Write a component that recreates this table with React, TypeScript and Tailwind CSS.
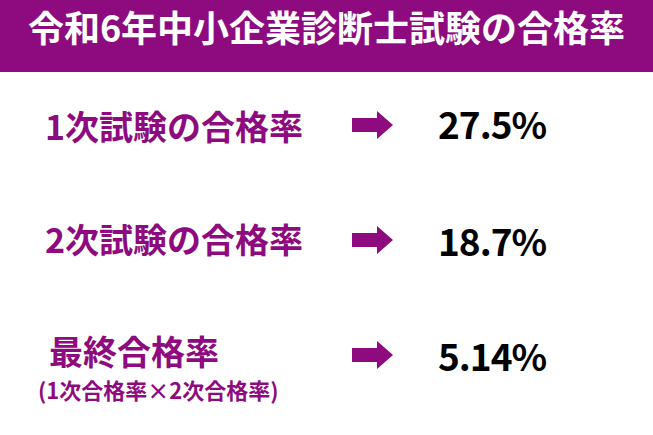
const jp = "font-['Noto_Sans_CJK_JP','Noto_Sans',sans-serif]"

type Row = {
  label: string
  sub?: string
  rate: string
  rowCls: string
  arrowCls: string
  rateCls: string
}

const rows: Row[] = [
  { label: "1次試験の合格率", rate: "27.5%", rowCls: "mt-[37px]", arrowCls: "pt-[2px]", rateCls: "-mt-[4px]" },
  { label: "2次試験の合格率", rate: "18.7%", rowCls: "mt-[79px]", arrowCls: "pt-[4px]", rateCls: "mt-0" },
  {
    label: "最終合格率",
    sub: "(1次合格率×2次合格率)",
    rate: "5.14%",
    rowCls: "mt-[75px]",
    arrowCls: "pt-[7px]",
    rateCls: "mt-[3px]",
  },
]

function Arrow() {
  return (
    <svg width="41" height="28" viewBox="0 0 41 28" className="block">
      <polygon points="0,7 25,7 25,0 41,14 25,28 25,21 0,21" fill="#8e0b7f" />
    </svg>
  )
}

export default function App() {
  return (
    <div className={`w-[653px] h-[435px] bg-white ${jp}`}>
      <div className="h-[72px] bg-[#8e0b7f] pt-[8px] text-center">
        <h1 className="text-[36px] leading-none font-bold text-white">令和6年中小企業診断士試験の合格率</h1>
      </div>

      <div className="flex flex-col">
        {rows.map((row) => (
          <div key={row.rate} className={`flex items-start ${row.rowCls}`}>
            <div className="w-[352px] shrink-0">
              <div className={`text-[34px] leading-none font-bold text-[#8e0b7f] ${row.sub ? "pl-[49px]" : "pl-[45px]"}`}>
                {row.label}
              </div>
              {row.sub && (
                <div className="pl-[38px] mt-[10px] text-[22px] leading-none font-bold text-[#8e0b7f]">
                  {row.sub}
                </div>
              )}
            </div>
            <div className={`w-[86px] shrink-0 ${row.arrowCls}`}>
              <Arrow />
            </div>
            <div className={`text-[37px] leading-none font-bold tracking-[-1px] text-black ${row.rateCls}`}>
              {row.rate}
            </div>
          </div>
        ))}
      </div>
    </div>
  )
}
